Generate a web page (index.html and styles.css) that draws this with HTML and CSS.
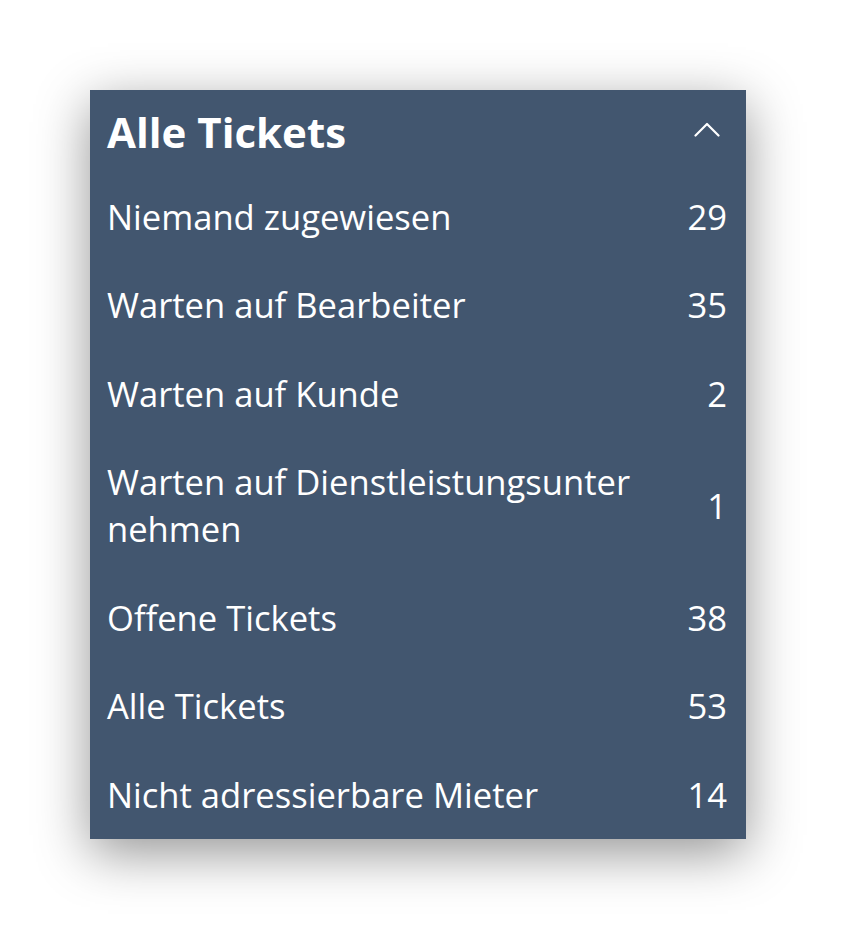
FILE: index.html
```html
<!DOCTYPE html>
<html lang="de">
<head>
<meta charset="utf-8">
<title>Alle Tickets</title>
<link rel="stylesheet" href="styles.css">
</head>
<body>
<section class="panel">
  <header class="panel-header">
    <h2 class="panel-title">Alle Tickets</h2>
    <svg class="chevron" width="26" height="15" viewBox="0 0 26 15" aria-hidden="true">
      <polyline points="1.5,13.5 13,2 24.5,13.5" fill="none" stroke="#ffffff" stroke-width="2.2" stroke-linecap="round" stroke-linejoin="round"/>
    </svg>
  </header>
  <ul class="list">
    <li class="item"><span class="label">Niemand zugewiesen</span><span class="count">29</span></li>
    <li class="item"><span class="label">Warten auf Bearbeiter</span><span class="count">35</span></li>
    <li class="item"><span class="label">Warten auf Kunde</span><span class="count">2</span></li>
    <li class="item"><span class="label">Warten auf Dienstleistungsunter<wbr>nehmen</span><span class="count">1</span></li>
    <li class="item"><span class="label">Offene Tickets</span><span class="count">38</span></li>
    <li class="item"><span class="label">Alle Tickets</span><span class="count">53</span></li>
    <li class="item"><span class="label">Nicht adressierbare Mieter</span><span class="count">14</span></li>
  </ul>
</section>
</body>
</html>
```
FILE: styles.css
```css
html, body {
  margin: 0;
  background: #ffffff;
}
body {
  padding: 90px;
  font-family: "Open Sans", "Noto Sans", "DejaVu Sans", sans-serif;
}
.panel {
  width: 656px;
  background: #42566f;
  color: #ffffff;
  box-shadow: 0 14px 50px rgba(0, 0, 0, 0.42);
}
.panel-header {
  height: 82px;
  box-sizing: border-box;
  padding: 14px 26px 12px 17px;
  display: flex;
  align-items: flex-start;
  justify-content: space-between;
}
.panel-title {
  margin: 0;
  font-size: 42px;
  line-height: 56px;
  font-weight: 700;
}
.chevron {
  display: block;
  margin-top: 18px;
}
.list {
  list-style: none;
  margin: 0;
  padding: 0;
}
.item {
  display: flex;
  align-items: center;
  justify-content: space-between;
  gap: 20px;
  padding: 20.75px 19px 20.75px 17px;
  font-size: 34.6px;
  line-height: 47px;
}
.label {
  flex: 1 1 auto;
  min-width: 0;
}
.count {
  flex: 0 0 auto;
  text-align: right;
}
```
